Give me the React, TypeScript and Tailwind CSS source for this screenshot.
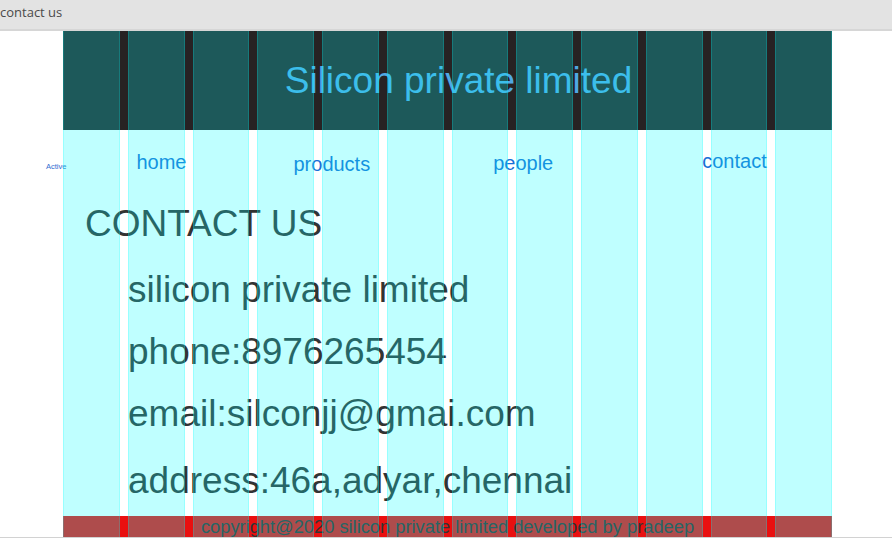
const columns = Array.from({ length: 12 }, (_, i) => i)

export default function App() {
  return (
    <div className="h-[538px] w-[892px] overflow-hidden border-b border-[#d2d2d2] bg-white font-['Liberation_Sans',Arial,sans-serif]">
      <div className="h-[31px] border-b-2 border-[#d6d6d6] bg-[#e3e3e3] pl-0 font-['Open_Sans',sans-serif] text-[13px] leading-[25px] text-[#4a4a4a]">
        contact us
      </div>

      <div className="relative ml-[63px] flex h-[506px] w-[769px] flex-col">
        <header className="h-[99px] bg-[#272223] pl-[22px] pt-[29px] text-center text-[37px] leading-[42px] text-[#50a8e4]">
          Silicon private limited
        </header>

        <nav className="flex h-[73px] items-start text-[20px] leading-[23px] text-[#1a6fd6]">
          <span className="-ml-[17px] mt-[32px] text-[7.5px] leading-[9px] text-[#2f6cd0]">Active</span>
          <a className="ml-[70px] mt-[21px]">home</a>
          <a className="ml-[107px] mt-[23px]">products</a>
          <a className="ml-[123px] mt-[22px]">people</a>
          <a className="ml-[149px] mt-[20px]">contact</a>
        </nav>

        <h1 className="pl-[22px] text-[37px] leading-[41px] text-[#333]">CONTACT US</h1>

        <div className="mt-[15px] pl-[65px] text-[37px] leading-[62px] text-[#333]">
          <p>silicon private limited</p>
          <p>phone:8976265454</p>
          <p>email:silconjj@gmai.com</p>
          <p className="mt-[5px]">address:46a,adyar,chennai</p>
        </div>

        <footer className="mt-auto h-[21px] bg-[#e91010] text-center text-[18.3px] leading-[21px] text-[#333]">
          copyright@2020 silicon private limited developed by pradeep
        </footer>

        {/* grid overlay */}
        <div className="pointer-events-none absolute inset-0 grid grid-cols-12 gap-x-[8px]">
          {columns.map(i => (
            <div key={i} className="border-x border-[rgba(0,255,255,0.2)] bg-[rgba(0,255,255,0.25)]" />
          ))}
        </div>
      </div>
    </div>
  )
}
